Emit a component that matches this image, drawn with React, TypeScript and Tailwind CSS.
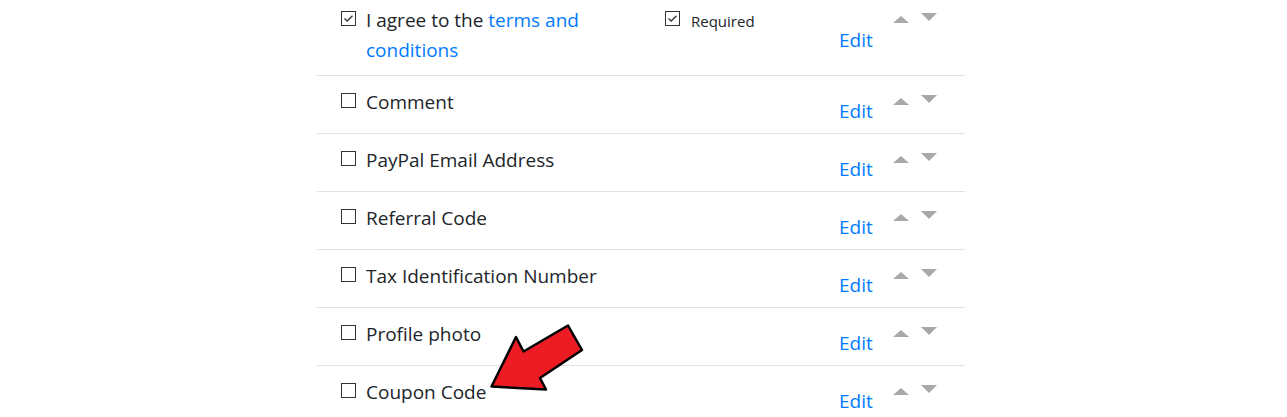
const FIELDS = [
  "Comment",
  "PayPal Email Address",
  "Referral Code",
  "Tax Identification Number",
  "Profile photo",
  "Coupon Code",
];

function Box({ checked }: { checked?: boolean }) {
  return (
    <div className="w-[15px] h-[15px] border border-[#333] flex items-center justify-center shrink-0">
      {checked && (
        <svg width="11" height="9" viewBox="0 0 11 9">
          <path d="M1.5 4.5 L4.2 7 L9.5 1.8" fill="none" stroke="#333" strokeWidth="1.3" />
        </svg>
      )}
    </div>
  );
}

function Sorter() {
  return (
    <div className="flex items-start gap-[12px] ml-[21px]">
      <svg width="16" height="7" viewBox="0 0 16 7" className="mt-[22px]">
        <polygon points="0,7 8,0 16,7" fill="#a8a8a8" />
      </svg>
      <svg width="16" height="8" viewBox="0 0 16 8" className="mt-[19px]">
        <polygon points="0,0 16,0 8,8" fill="#a8a8a8" />
      </svg>
    </div>
  );
}

function Row({
  children,
  checked,
  required,
  tall,
}: {
  children: React.ReactNode;
  checked?: boolean;
  required?: boolean;
  tall?: boolean;
}) {
  return (
    <div
      className={`flex items-start pl-[24px] border-b border-[#dee2e6] ${
        tall ? "h-[82px]" : "h-[58px]"
      }`}
    >
      <div className="mt-[17px]">
        <Box checked={checked} />
      </div>
      <div className="ml-[10px] w-[289px] pt-[11px] text-[19px] leading-[30px] text-[#212529]">
        {children}
      </div>
      <div className="ml-[10px] w-[174px] flex items-start">
        {required && (
          <>
            <div className="mt-[17px]">
              <Box checked />
            </div>
            <span className="ml-[11px] mt-[15px] text-[15px] leading-[24px] text-[#212529]">
              Required
            </span>
          </>
        )}
      </div>
      <a
        href="#"
        className={`w-[33px] text-[19px] leading-[30px] text-[#007bff] ${
          tall ? "mt-[31px]" : "mt-[20px]"
        }`}
      >
        Edit
      </a>
      <Sorter />
    </div>
  );
}

export default function App() {
  return (
    <div
      className="relative h-[417px] w-[1287px] overflow-hidden bg-white"
      style={{ fontFamily: '"Open Sans", "Noto Sans", sans-serif' }}
    >
      <div className="ml-[317px] w-[648px] -mt-[6px]">
        <Row checked required tall>
          I agree to the <span className="text-[#007bff]">terms and conditions</span>
        </Row>
        {FIELDS.map((f) => (
          <Row key={f}>{f}</Row>
        ))}
      </div>
      <svg
        className="absolute left-0 top-0 pointer-events-none"
        width="1287"
        height="417"
        viewBox="0 0 1287 417"
      >
        <polygon
          points="491.5,386.5 516,337 523.5,351.5 568,325.5 582,350 540,378 546,389.5"
          fill="#ed1c24"
          stroke="#000"
          strokeWidth="2.5"
          strokeLinejoin="round"
        />
      </svg>
    </div>
  );
}
